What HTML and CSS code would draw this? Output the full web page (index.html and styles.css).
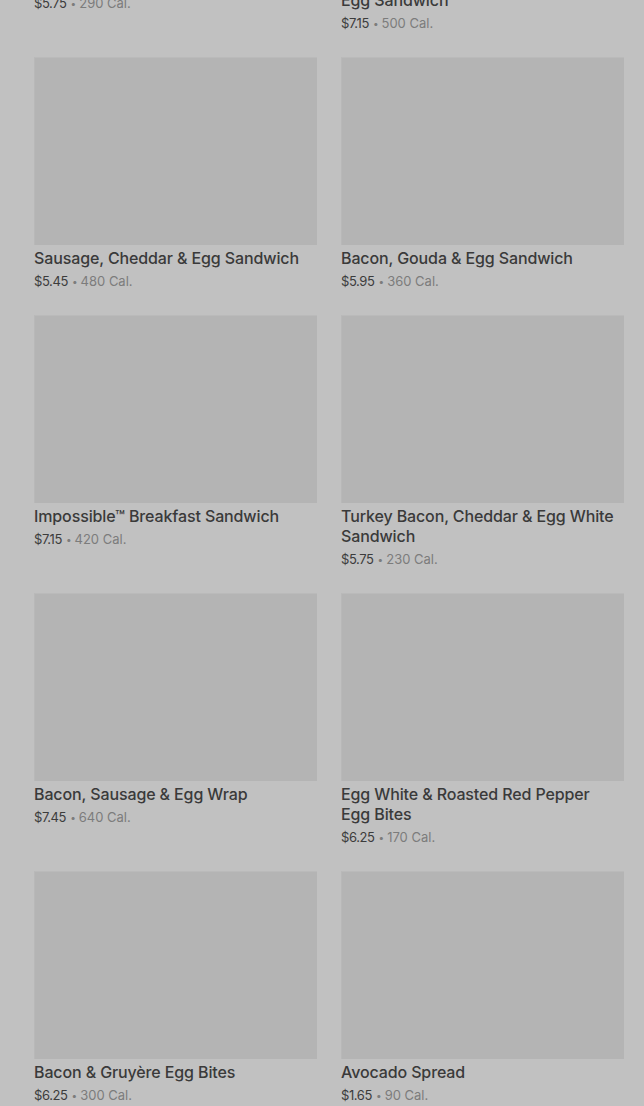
FILE: index.html
```html
<!DOCTYPE html>
<html>
<head>
<meta charset="utf-8">
<link rel="stylesheet" href="styles.css">
</head>
<body>
<main class="page">
  <div class="grid">
    <div class="card"><div class="thumb"></div><div class="name">Spinach, Feta &amp; Egg White Wrap</div><div class="meta"><span class="price">$5.75</span><span class="dot">•</span><span class="cal">290 Cal.</span></div></div>
    <div class="card"><div class="thumb"></div><div class="name">Double-Smoked Bacon, Cheddar &amp;<br>Egg Sandwich</div><div class="meta"><span class="price">$7.15</span><span class="dot">•</span><span class="cal">500 Cal.</span></div></div>
    <div class="card"><div class="thumb"></div><div class="name">Sausage, Cheddar &amp; Egg Sandwich</div><div class="meta"><span class="price">$5.45</span><span class="dot">•</span><span class="cal">480 Cal.</span></div></div>
    <div class="card"><div class="thumb"></div><div class="name">Bacon, Gouda &amp; Egg Sandwich</div><div class="meta"><span class="price">$5.95</span><span class="dot">•</span><span class="cal">360 Cal.</span></div></div>
    <div class="card"><div class="thumb"></div><div class="name">Impossible™ Breakfast Sandwich</div><div class="meta"><span class="price">$7.15</span><span class="dot">•</span><span class="cal">420 Cal.</span></div></div>
    <div class="card"><div class="thumb"></div><div class="name">Turkey Bacon, Cheddar &amp; Egg White Sandwich</div><div class="meta"><span class="price">$5.75</span><span class="dot">•</span><span class="cal">230 Cal.</span></div></div>
    <div class="card"><div class="thumb"></div><div class="name">Bacon, Sausage &amp; Egg Wrap</div><div class="meta"><span class="price">$7.45</span><span class="dot">•</span><span class="cal">640 Cal.</span></div></div>
    <div class="card"><div class="thumb"></div><div class="name">Egg White &amp; Roasted Red Pepper Egg Bites</div><div class="meta"><span class="price">$6.25</span><span class="dot">•</span><span class="cal">170 Cal.</span></div></div>
    <div class="card"><div class="thumb"></div><div class="name">Bacon &amp; Gruyère Egg Bites</div><div class="meta"><span class="price">$6.25</span><span class="dot">•</span><span class="cal">300 Cal.</span></div></div>
    <div class="card"><div class="thumb"></div><div class="name">Avocado Spread</div><div class="meta"><span class="price">$1.65</span><span class="dot">•</span><span class="cal">90 Cal.</span></div></div>
  </div>
</main>
</body>
</html>
```
FILE: styles.css
```css
html, body {
  margin: 0;
  padding: 0;
  background: #c1c1c1;
  overflow: hidden;
}
body {
  font-family: Inter, "Liberation Sans", sans-serif;
  height: 1106px;
}
.page {
  padding: 0 20px 0 34px;
}
.grid {
  margin-top: -221px;
  display: grid;
  grid-template-columns: 283px 283px;
  column-gap: 24px;
  row-gap: 24px;
  align-items: start;
}
.card {
  display: flex;
  flex-direction: column;
}
.thumb {
  height: 188px;
  background: #b4b4b4;
  border-top: 1px solid #bababa;
  border-left: 1px solid #b8b8b8;
  box-sizing: border-box;
}
.name {
  margin-top: 3px;
  padding-right: 6px;
  font-size: 16px;
  line-height: 20px;
  font-weight: 500;
  color: #3a3a3a;
  letter-spacing: -0.12px;
}
.meta {
  margin-top: 3px;
  height: 20px;
  font-size: 13px;
  line-height: 20px;
  white-space: nowrap;
}
.price {
  color: #3c3c3c;
  letter-spacing: -0.4px;
}
.dot {
  display: inline-block;
  color: #7c7c7c;
  font-size: 10px;
  line-height: 1;
  vertical-align: 1px;
  margin: 0 3px 0 4px;
}
.cal {
  color: #7c7c7c;
  letter-spacing: 0;
}
```
